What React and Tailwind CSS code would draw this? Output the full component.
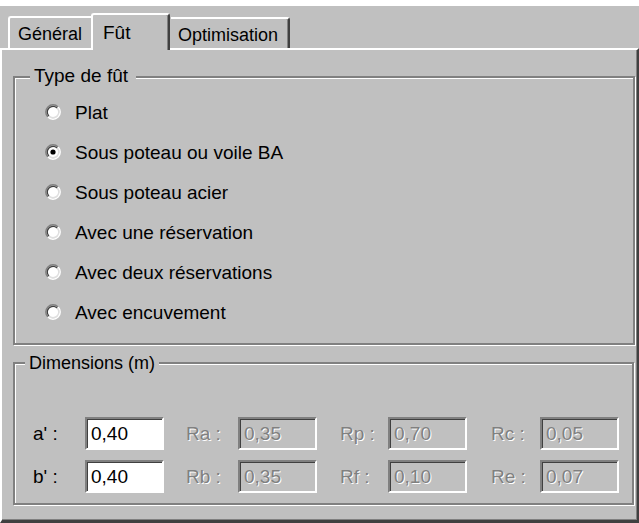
import React from "react";

function Radio({ checked }) {
  const r1 = 7.2;
  const r2 = 6;
  const c = 8;
  const k = 0.7071;
  const arc = (r) =>
    `M ${c - r * k} ${c + r * k} A ${r} ${r} 0 0 1 ${c + r * k} ${c - r * k}`;
  const arc2 = (r) =>
    `M ${c + r * k} ${c - r * k} A ${r} ${r} 0 0 1 ${c - r * k} ${c + r * k}`;
  return (
    <svg width="16" height="16" viewBox="0 0 16 16" className="shrink-0">
      <circle cx="8" cy="8" r="6.2" fill="#fff" />
      <path d={arc(r1)} stroke="#808080" strokeWidth="1.5" fill="none" />
      <path d={arc2(r1)} stroke="#ffffff" strokeWidth="1.5" fill="none" />
      <path d={arc(r2 - 0.3)} stroke="#404040" strokeWidth="1.2" fill="none" />
      <path d={arc2(r2 - 0.3)} stroke="#dfdfdf" strokeWidth="1.2" fill="none" />
      {checked && <circle cx="8" cy="8" r="2.6" fill="#000" />}
    </svg>
  );
}

function RadioRow({ label, checked }) {
  return (
    <div className="flex items-center h-[40px] gap-[14px]">
      <Radio checked={checked} />
      <span className="leading-none text-black">{label}</span>
    </div>
  );
}

function Input({ value, disabled }) {
  return (
    <div
      className={
        disabled
          ? "w-[79px] h-[33px] shrink-0 flex items-center pl-[4px] border-2 border-t-[#808080] border-l-[#808080] border-b-white border-r-white shadow-[inset_1px_1px_0_#404040] bg-[#c0c0c0] text-[#808080] [text-shadow:1px_1px_0_#ffffff]"
          : "w-[79px] h-[33px] shrink-0 flex items-center pl-[4px] border-2 border-t-[#808080] border-l-[#808080] border-b-white border-r-white shadow-[inset_1px_1px_0_#404040] bg-white text-black"
      }
    >
      <span className="leading-none">{value}</span>
    </div>
  );
}

export default function App() {
  const etched =
    "relative border-2 border-[#808080] shadow-[inset_1px_1px_0_#ffffff,1px_1px_0_#ffffff]";
  const dis = "text-[#808080] [text-shadow:1px_1px_0_#ffffff] leading-none";
  return (
    <div className="w-[639px] h-[523px] bg-[#c0c0c0] overflow-hidden font-['Liberation_Sans',Arial,sans-serif] text-[19px] text-black select-none">
      <div className="h-[6px] bg-white" />
      {/* Tabs */}
      <div className="h-[42px] flex items-end pl-[8px]">
        <div className="w-[84px] h-[32px] border-t-2 border-l-2 border-white rounded-tl-[3px] flex items-center pl-[8px] pt-[2px] text-[18px] leading-none">
          Général
        </div>
        <div className="relative z-10 w-[79px] h-[37px] -mb-[2px] -ml-[1px] bg-[#c0c0c0] border-t-2 border-l-2 border-white border-r-2 border-r-[#404040] shadow-[inset_-1px_0_0_#808080] rounded-t-[3px] flex items-start pt-[8px] pl-[10px] leading-none">
          Fût
        </div>
        <div className="w-[119px] h-[31px] ml-[1px] border-t-2 border-white border-r-2 border-r-[#404040] shadow-[inset_-1px_0_0_#808080] rounded-tr-[3px] flex items-center pl-[7px] pt-[2px] text-[18px] leading-none">
          Optimisation
        </div>
      </div>
      {/* Panel */}
      <div className="h-[475px] border-t-2 border-l-2 border-white border-r-2 border-r-[#404040] border-b-[3px] border-b-[#404040] shadow-[inset_-1px_-1px_0_#808080] pl-[11px] pr-[2px] pt-[26px]">
        <div className={etched + " h-[269px] w-[622px]"}>
          <div className="absolute left-[15px] -top-[13px] px-[4px] pr-[8px] bg-[#c0c0c0] leading-[22px]">
            Type de fût
          </div>
          <div className="pt-[14px] pl-[30px] flex flex-col">
            <RadioRow label="Plat" />
            <RadioRow label="Sous poteau ou voile BA" checked />
            <RadioRow label="Sous poteau acier" />
            <RadioRow label="Avec une réservation" />
            <RadioRow label="Avec deux réservations" />
            <RadioRow label="Avec encuvement" />
          </div>
        </div>
        <div className={etched + " h-[143px] w-[621px] mt-[17px]"}>
          <div className="absolute left-[10px] -top-[12px] px-[4px] bg-[#c0c0c0] leading-[22px] text-[18px]">
            Dimensions (m)
          </div>
          <div className="pt-[53px] pl-[18px] flex flex-col gap-[10px]">
            <div className="flex items-center">
              <span className="w-[52px] leading-none">a' :</span>
              <Input value="0,40" />
              <span className={dis + " w-[52px] ml-[22px]"}>Ra :</span>
              <Input value="0,35" disabled />
              <span className={dis + " w-[48px] ml-[23px]"}>Rp :</span>
              <Input value="0,70" disabled />
              <span className={dis + " w-[49px] ml-[24px]"}>Rc :</span>
              <Input value="0,05" disabled />
            </div>
            <div className="flex items-center">
              <span className="w-[52px] leading-none">b' :</span>
              <Input value="0,40" />
              <span className={dis + " w-[52px] ml-[22px]"}>Rb :</span>
              <Input value="0,35" disabled />
              <span className={dis + " w-[48px] ml-[23px]"}>Rf :</span>
              <Input value="0,10" disabled />
              <span className={dis + " w-[49px] ml-[24px]"}>Re :</span>
              <Input value="0,07" disabled />
            </div>
          </div>
        </div>
      </div>
    </div>
  );
}
